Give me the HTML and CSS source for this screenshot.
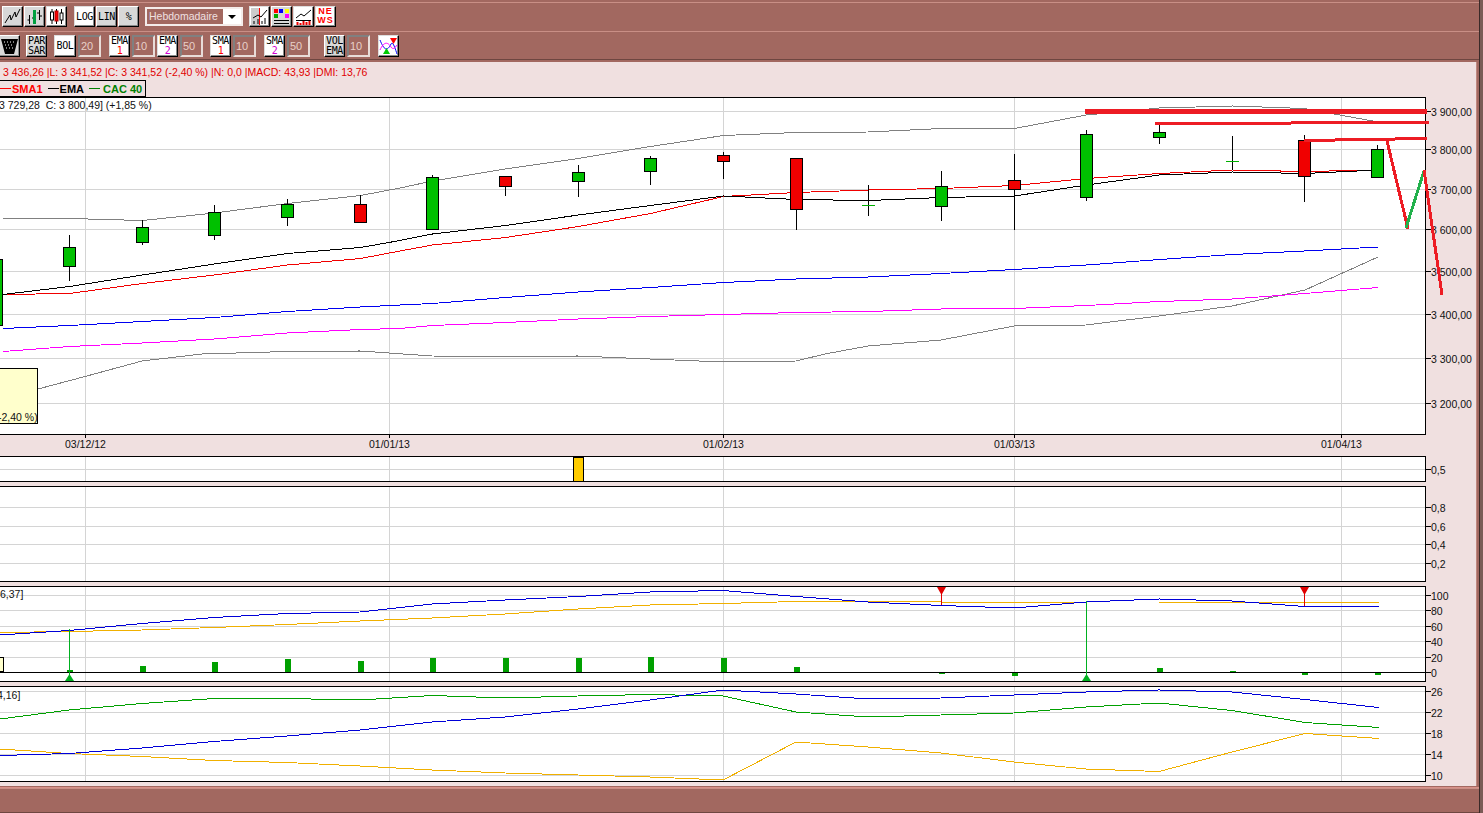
FILE: index.html
```html
<!DOCTYPE html>
<html lang="fr">
<head>
    <meta charset="UTF-8">
    <title>CAC 40 - Hebdomadaire</title>
    <link rel="stylesheet" href="styles.css">
</head>
<body>
<div class="app">
    <div class="toolbar top">
        <div class="btn"><svg width="19" height="19"><path d="M2 16L7 8L8 13L12 5L13 10L17 2" class="ic-line"/></svg></div>
        <div class="btn"><svg width="19" height="19"><path d="M2.500 13H4.500M4.500 8V17M7 11H9" class="ic-line"/><rect x="8" y="3" width="3" height="14" fill="#00a040"/><path d="M12 6H14M14.500 3V13M15 9H17" class="ic-line"/></svg></div>
        <div class="btn on"><svg width="19" height="19"><path d="M5 2V17M9.500 2V17M14.500 2V17" class="ic-line"/><rect x="3.500" y="5" width="3" height="8" fill="#fff" stroke="#000"/><rect x="8" y="4" width="3" height="10" fill="#f00" stroke="#a00"/><rect x="13" y="6" width="3" height="7" fill="#fff" stroke="#000"/></svg></div>
        <div class="btn on txt m6">LOG</div>
        <div class="btn txt">LIN</div>
        <div class="btn txt">%</div>
        <div class="period m5"><span class="period-name">Hebdomadaire</span><span class="period-arrow"></span></div>
        <div class="btn on m5"><svg width="19" height="19"><rect x="1" y="1" width="8" height="17" fill="#ccc"/><path d="M9.500 1V18" stroke="#f00"/><path d="M3 11L8 8L11 10L17 3M4 17V14M8 17V12M12 17V14M15 17V11" class="ic-line"/></svg></div>
        <div class="btn"><svg width="19" height="19"><rect x="2" y="2" width="4" height="4" fill="#f00"/><rect x="7" y="2" width="4" height="4" fill="#00f"/><rect x="13" y="2" width="4" height="4" fill="#ff0"/><rect x="2" y="7" width="4" height="4" fill="#0a0"/><rect x="13" y="7" width="4" height="4" fill="#f0f"/><path d="M2 13.500H17M2 16.500H17" stroke="#000"/></svg></div>
        <div class="btn on"><svg width="19" height="19"><path d="M2 11L7 7L10 9L17 3" class="ic-line"/><path d="M2 13.500H17" stroke="#000"/><path d="M3.500 18V15M6.500 18V16M9.500 18V14M12.500 18V15M15.500 18V14" stroke="#e00" stroke-width="2"/></svg></div>
        <div class="btn on news">NE<br>WS</div>
    </div>
    <div class="toolbar params">
        <div class="btn tall first"><svg width="19" height="20"><path d="M1 3H18L14 18H5Z" fill="#000"/><path d="M4 6H15M5 9H14M6 12H13" stroke="#fff" stroke-dasharray="1 2"/></svg></div>
        <div class="btn tall txt two m4">PAR<br>SAR</div>
        <div class="btn tall on txt wide m5">BOL</div>
        <div class="num">20</div>
        <div class="btn tall on txt two m6">EMA<br><span class="red">1</span></div>
        <div class="num">10</div>
        <div class="btn tall on txt two">EMA<br><span class="pink">2</span></div>
        <div class="num">50</div>
        <div class="btn tall on txt two m5">SMA<br><span class="red">1</span></div>
        <div class="num">10</div>
        <div class="btn tall on txt two m6">SMA<br><span class="pink">2</span></div>
        <div class="num">50</div>
        <div class="btn tall txt two m12">VOL<br>EMA</div>
        <div class="num">10</div>
        <div class="btn tall on m6"><svg width="19" height="20"><path d="M1 4C5 14 8 16 12 8C14 5 16 12 18 18" fill="none" stroke="#00f"/><path d="M1 14C5 5 9 6 12 11C14 14 16 12 18 9" fill="none" stroke="#f0f"/><path d="M11 2H18L14.500 8Z" fill="#f00"/><path d="M4 18H11L7.500 12Z" fill="#0c0"/></svg></div>
    </div>
    <main class="workspace">
        <div class="quote">3 436,26 |L: 3 341,52 |C: 3 341,52 (-2,40 %) |N: 0,0 |MACD: 43,93 |DMI: 13,76</div>
        <div class="legend">
            <span class="dash red-bg"></span><b class="red">SMA1</b>
            <span class="dash black-bg"></span><b>EMA</b>
            <span class="dash green-bg"></span><b class="green">CAC 40</b>
        </div>
        <div class="panes">
            <svg id="pane1" class="pane" width="1477" height="355" viewBox="0 97 1477 355"></svg>
            <svg id="pane2" class="pane" width="1477" height="26" viewBox="0 456 1477 26"></svg>
            <svg id="pane3" class="pane" width="1477" height="96" viewBox="0 486 1477 96"></svg>
            <svg id="pane4" class="pane" width="1477" height="96" viewBox="0 586 1477 96"></svg>
            <svg id="pane5" class="pane" width="1477" height="96" viewBox="0 686 1477 96"></svg>
        </div>
    </main>
    <div class="statusbar"></div>
</div>
<script src="script.js"></script>
</body>
</html>
```
FILE: styles.css
```css
body{
    margin: 0;
    height: 813px;
    overflow: hidden;
    background-color: #7a5a55;
}
.app{
    width: 1479px;
    height: 813px;
    display: flex;
    flex-direction: column;
    background-color: #a26860;
    border-right: 1px solid #3a2a28;
    font-family: "Liberation Sans", Arial, sans-serif;
}
.toolbar{
    display: flex;
    align-items: center;
    box-sizing: border-box;
    border-top: 1px solid #c98f86;
}
.top{
    height: 29px;
    margin-top: 2px;
    padding-left: 2px;
    padding-bottom: 1px;
    gap: 1px;
}
.params{
    height: 29px;
    gap: 2px;
    padding-top: 1px;
    border-bottom: 1px solid #6e4640;
}
.btn{
    width: 21px;
    height: 21px;
    flex: none;
    box-sizing: border-box;
    background-color: #d8d8d8;
    border: 1px solid;
    border-color: #fff #000 #000 #fff;
    box-shadow: inset -1px -1px 0 #8a8a8a;
    display: flex;
    align-items: center;
    justify-content: center;
    overflow: hidden;
}
.btn.on{
    background-color: #fff;
    border-color: #ddd #000 #000 #ddd;
}
.btn.tall{
    height: 22px;
}
.btn.wide{
    width: 22px;
}
.btn.first{
    margin-left: -1px;
}
.txt{
    font-family: "DejaVu Sans Mono", monospace;
    font-size: 10px;
    color: #000;
    text-align: center;
    letter-spacing: -0.4px;
    line-height: 10px;
}
.two{
    display: block;
    padding-top: 0;
    line-height: 9.500px;
}
.news{
    display: block;
    color: #f00;
    font-weight: bold;
    font-size: 9px;
    line-height: 9px;
    letter-spacing: 1px;
    text-align: center;
}
.ic-line{
    fill: none;
    stroke: #000;
}
.m4{ margin-left: 4px; }
.m5{ margin-left: 5px; }
.m6{ margin-left: 6px; }
.m12{ margin-left: 12px; }
.period{
    width: 98px;
    height: 19px;
    box-sizing: border-box;
    border: 2px solid #f4ecea;
    display: flex;
    justify-content: space-between;
}
.period-name{
    color: #f0e0e0;
    font-size: 10.500px;
    line-height: 15px;
    padding-left: 2px;
}
.period-arrow{
    width: 18px;
    background-color: #fff;
    position: relative;
}
.period-arrow::after{
    content: "";
    position: absolute;
    left: 5px;
    top: 6px;
    border: 4px solid transparent;
    border-top: 4px solid #000;
}
.num{
    width: 23px;
    height: 22px;
    box-sizing: border-box;
    border: 2px solid;
    border-color: #808080 #e8dcd8 #e8dcd8 #808080;
    color: #e8d0c8;
    font-size: 11px;
    line-height: 18px;
    padding-left: 1px;
    flex: none;
}
.workspace{
    width: 1477px;
    height: 724px;
    margin-top: 2px;
    box-sizing: border-box;
    background-color: #f0e0e0;
    border-right: 1px solid #c08880;
    display: flex;
    flex-direction: column;
    align-items: flex-start;
}
.quote{
    height: 18px;
    line-height: 20px;
    padding-left: 3px;
    font-size: 10.500px;
    color: #e00000;
    white-space: nowrap;
}
.legend{
    width: 146px;
    height: 17px;
    box-sizing: border-box;
    border: 1px solid #000;
    border-left: 0;
    display: flex;
    align-items: center;
    font-size: 11px;
    white-space: nowrap;
}
.legend b{
    margin-right: 5px;
}
.legend .green{
    margin-left: 2px;
    margin-right: 0;
}
.dash{
    width: 11px;
    height: 1px;
    margin-right: 1px;
}
.red{ color: #f00; }
.pink{ color: #d000d0; }
.green{ color: #008000; }
.red-bg{ background-color: #f00; }
.black-bg{ background-color: #000; }
.green-bg{ background-color: #008000; }
.panes{
    display: flex;
    flex-direction: column;
    gap: 4px;
}
.pane{
    display: block;
}
.pane text{
    font-family: "Liberation Sans", Arial, sans-serif;
    font-size: 10.500px;
    fill: #111;
}
.stair{
    fill: none;
    shape-rendering: crispEdges;
}
.sharp{
    shape-rendering: crispEdges;
}
.statusbar{
    flex: 1;
    margin-top: 1px;
    border-top: 1px solid #d89088;
    box-shadow: inset 0 1px 0 #c98f86;
    border-bottom: 1px solid #6e4640;
}
```
FILE: script.js
```js
// the panes use page coordinates through their viewBox
var PANE_R = 1425.5;
var VGRID = [85.5, 389.5, 723.5, 1014.5, 1341.5];
var XS = [3, 69.5, 142.5, 214.5, 287.5, 360.5, 400, 432.5, 505.5, 578.5, 650.5, 723.5, 796.5, 868.5, 941.5, 1014.5, 1086.5, 1159.5, 1232.5, 1304.5, 1378];

function line(x1, y1, x2, y2, color, w) {
    return '<line class="sharp" x1="' + x1 + '" y1="' + y1 + '" x2="' + x2 + '" y2="' + y2 + '" stroke="' + color + '" stroke-width="' + (w || 1) + '"/>';
}
function rect(x, y, w, h, fill, stroke) {
    return '<rect class="sharp" x="' + x + '" y="' + y + '" width="' + w + '" height="' + h + '" fill="' + fill + '" stroke="' + (stroke || 'none') + '"/>';
}
function text(x, y, s) {
    return '<text x="' + x + '" y="' + y + '">' + s + '</text>';
}
function curve(ys, color, xs) {
    var pts = [];
    xs = xs || XS;
    for (var i = 0; i < ys.length; i++) {
        pts.push(xs[i] + ',' + ys[i]);
    }
    return '<polyline class="stair" stroke="' + color + '" points="' + pts.join(' ') + '"/>';
}
function frame(top, bottom, hgrid, labels) {
    var s = rect(0, top, PANE_R, bottom - top, '#fff');
    for (var i = 0; i < hgrid.length; i++) {
        s += line(0, hgrid[i], PANE_R, hgrid[i], '#d4d4d4');
    }
    for (i = 0; i < VGRID.length; i++) {
        s += line(VGRID[i], top, VGRID[i], bottom, '#d4d4d4');
    }
    for (i = 0; i < labels.length; i++) {
        s += line(PANE_R, hgrid[i], PANE_R + 5, hgrid[i], '#000');
        s += text(1431, hgrid[i] + 4, labels[i]);
    }
    return s;
}
function border(top, bottom) {
    return line(-1, top, PANE_R, top, '#000', 1) + line(-1, bottom, PANE_R, bottom, '#000', 1) + line(PANE_R, top, PANE_R, bottom, '#000', 1);
}
function candle(c, wickTop, wickBot, top, bot, color) {
    return line(c, wickTop, c, wickBot, '#000') + rect(c - 6, Math.floor(top) + .5, 12, Math.round(bot - top), color, '#000');
}
function doji(c, wickTop, wickBot, y) {
    return line(c, wickTop, c, wickBot, '#000') + line(c - 6.5, y, c + 6.5, y, '#00b000');
}

// prix hebdo
var G = '#00c000', R = '#f00000';
var candles = [
    [-3.5, 255, 325, 259, 324.5, G],
    [69.5, 235, 281, 247, 265.5, G],
    [142.5, 220, 245, 227, 242, G],
    [214.5, 205, 240, 212, 235, G],
    [287.5, 199, 226, 204, 216.5, G],
    [360.5, 195, 223, 204, 221.5, R],
    [432.5, 175, 230, 177, 229, G],
    [505.5, 176, 196, 176, 186, R],
    [578.5, 165, 197, 172, 180.5, G],
    [650.5, 156, 185, 158, 170.5, G],
    [723.5, 152, 179, 155, 160.5, R],
    [796.5, 158, 230, 158, 209, R],
    [941.5, 171, 221, 186, 206, G],
    [1014.5, 154, 230, 180, 189, R],
    [1086.5, 130, 201, 134, 197, G],
    [1159.5, 125, 144, 132, 137, G],
    [1304.5, 135, 202, 140, 176, R],
    [1377.5, 145, 177, 149, 177, G]
];

var up = [218.5, 218.5, 220.5, 213, 203.5, 195.5, 188, 181, 169, 158.5, 146.5, 135.5, 132.5, 132, 128.5, 128.5, 115, 108, 106, 108.5, 122];
var ema = [294.5, 286.5, 275, 264, 253.5, 247.5, 240.5, 234, 225.5, 215, 205.5, 196, 199.5, 200.5, 197.5, 196, 185, 175, 172, 173.5, 170];
var sma = [294.5, 293.5, 283.5, 275, 265, 258.5, 251, 245, 237.5, 226.5, 213.5, 196.5, 192.5, 190, 188.5, 185.5, 178.5, 173.5, 170, 171.5, 170];
var blue = [328.5, 325.5, 321.5, 317.5, 311.5, 307, 305, 303.5, 297.5, 292, 287.5, 282.5, 279, 277, 273.5, 269.5, 265, 259.5, 254.5, 251, 247];
var mag = [351.5, 346.5, 343, 339, 333, 329.5, 328.5, 325.5, 322.5, 319, 316.5, 314.5, 312.5, 311.5, 309, 308.5, 305.5, 301.5, 299, 293.5, 287.5];
var lowX = [38, 85, 142, 202, 287, 360, 432, 505, 578, 650, 723, 796, 825, 868, 941, 1014, 1086, 1159, 1232, 1305, 1378];
var low = [389, 376.5, 361, 354, 351.5, 351, 356, 356.5, 356, 359, 362, 361, 354, 346, 340, 326, 325, 316, 306, 290, 257];

var p1 = frame(97, 434, [111.5, 149.5, 189.5, 229.5, 271.5, 314.5, 358.5, 403.5],
    ['3 900,00', '3 800,00', '3 700,00', '3 600,00', '3 500,00', '3 400,00', '3 300,00', '3 200,00']);
p1 += curve(low, '#808080', lowX) + curve(up, '#808080') + curve(blue, '#0000f0') + curve(mag, '#ff00ff') + curve(sma, '#f00000') + curve(ema, '#000');
candles.forEach(function (c) { p1 += candle(c[0], c[1], c[2], c[3], c[4], c[5]); });
p1 += doji(868.5, 185, 216, 205.5) + doji(1232.5, 136, 170, 161.5);
p1 += border(97.5, 434.5);
// traits dessines a la main
p1 += line(1085, 111, 1427, 111, '#ed1c24', 5);
p1 += line(1155, 123.5, 1291, 123.5, '#ed1c24', 3) + line(1291, 122.5, 1429, 122.5, '#ed1c24', 3);
p1 += line(1304, 140.5, 1335, 140.5, '#ed1c24', 3) + line(1335, 139.5, 1395, 139.5, '#ed1c24', 3) + line(1395, 138.5, 1427, 138.5, '#ed1c24', 3);
p1 += line(1387, 141, 1408, 229, '#ed1c24', 3) + line(1406, 228, 1424, 171, '#22b14c', 3) + line(1424, 170, 1442, 295, '#ed1c24', 3);
p1 += text(-1, 109, '3 729,28&#160; C: 3 800,49] (+1,85 %)');
p1 += rect(-3, 368.5, 40, 55, '#ffffcc', '#000') + text(-2, 421, '-2,40 %)');
p1 += line(85.5, 434, 85.5, 438, '#000') + text(65, 448, '03/12/12');
p1 += line(389.5, 434, 389.5, 438, '#000') + text(369, 448, '01/01/13');
p1 += line(723.5, 434, 723.5, 438, '#000') + text(703, 448, '01/02/13');
p1 += line(1014.5, 434, 1014.5, 438, '#000') + text(994, 448, '01/03/13');
p1 += line(1341.5, 434, 1341.5, 438, '#000') + text(1321, 448, '01/04/13');
document.getElementById('pane1').innerHTML = p1;

var p2 = frame(456, 481, [469.5], ['0,5']);
p2 += rect(573.5, 457.5, 10, 24, '#ffcc00', '#000') + border(456.5, 481.5);
document.getElementById('pane2').innerHTML = p2;

var p3 = frame(486, 581, [507.5, 526.5, 544.5, 563.5], ['0,8', '0,6', '0,4', '0,2']);
p3 += border(486.5, 581.5);
document.getElementById('pane3').innerHTML = p3;

// stochastique
var stX = [0, 69, 142, 214, 287, 360, 432, 505, 578, 650, 723, 796, 868, 941, 1014, 1086, 1159, 1232, 1305, 1379];
var stBlue = [635, 630.5, 623.5, 617.5, 613.5, 612, 604, 600, 596.5, 592, 590.5, 596.5, 602, 605.5, 608, 602, 599, 601, 606.5, 606.5];
var stOrange = [632.5, 631.5, 630, 627.5, 624.5, 621, 618, 614, 609, 605, 603.5, 601.5, 601.5, 602, 603, 602, 602, 602, 602.5, 602.5];
var bars = [[69.5, 670], [142.5, 666], [214.5, 662], [287.5, 659], [360.5, 661], [432.5, 658], [505.5, 658], [578.5, 658], [650.5, 657], [723.5, 658], [796.5, 667], [1159.5, 668], [1232.5, 671]];
var negBars = [[941.5, 674], [1014.5, 676], [1304.5, 675], [1377.5, 675]];
var p4 = frame(586, 681, [595.5, 610.5, 626.5, 641.5, 657.5, 672.5], ['100', '80', '60', '40', '20', '0']);
p4 += line(0, 672.5, PANE_R, 672.5, '#000');
bars.forEach(function (b) { p4 += rect(b[0] - 3, b[1], 6, 672 - b[1], '#00a000'); });
negBars.forEach(function (b) { p4 += rect(b[0] - 3, 673, 6, b[1] - 673, '#00a000'); });
p4 += curve(stOrange, '#f0b000', stX) + curve(stBlue, '#0000d8', stX);
p4 += line(69.5, 629, 69.5, 675, '#00b020') + line(1086.5, 601, 1086.5, 675, '#00b020');
p4 += '<path d="M69.5 674L74 681H65Z" fill="#00b020"/><path d="M1086.500 674L1091 681H1082Z" fill="#00b020"/>';
p4 += line(941.5, 590, 941.5, 605, '#e00000') + line(1304.5, 590, 1304.5, 606, '#e00000');
p4 += '<path d="M937 587H946L941.500 595Z" fill="#e00000"/><path d="M1300 587H1309L1304.500 595Z" fill="#e00000"/>';
p4 += rect(-3, 657.5, 6.5, 14, '#ffffcc', '#000');
p4 += border(586.5, 681.5) + text(0, 598, '6,37]');
document.getElementById('pane4').innerHTML = p4;

// DMI
var dGreen = [719, 710, 703.5, 698.5, 698.5, 700, 695.5, 698, 696, 694.5, 696, 712, 717, 715, 713, 707, 703, 710.5, 722.5, 727.5];
var dBlue = [755.5, 753.5, 748, 741.5, 736, 730, 722, 717, 709, 700, 690, 694, 699, 698, 695, 692, 690, 692, 699.5, 707.5];
var dOrange = [749, 753.5, 756.5, 760.5, 762.5, 766, 770, 773, 775, 777, 780, 742, 747, 753, 762, 769, 771.5, 752, 733.5, 738.5];
var p5 = frame(686, 781, [691.5, 712.5, 733.5, 754.5, 775.5], ['26', '22', '18', '14', '10']);
p5 += curve(dOrange, '#f0b000', stX) + curve(dGreen, '#00a000', stX) + curve(dBlue, '#0000d8', stX);
p5 += border(686.5, 781.5) + text(-3, 699, '4,16]');
document.getElementById('pane5').innerHTML = p5;
```
